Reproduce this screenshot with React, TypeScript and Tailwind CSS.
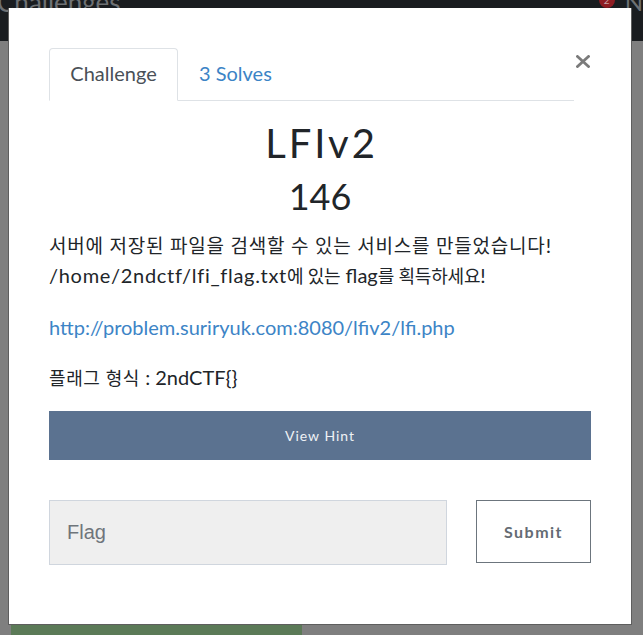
import React from 'react'

const kr = '"Lato", "Noto Sans CJK KR", sans-serif'

// 한글 구간: 원본 폭에 맞춰 줄마다 크기/자간을 다르게 준다
const Ko = ({ children, className = '' }: { children: React.ReactNode; className?: string }) => (
  <span className={`leading-[20px] ${className}`}>{children}</span>
)

const CloseIcon = () => (
  <svg width="14" height="13" viewBox="0 0 14 13" fill="none">
    <path d="M1.5 1.5L12.5 11.5M12.5 1.5L1.5 11.5" stroke="#7b7b7b" strokeWidth="2.8" strokeLinecap="square" />
  </svg>
)

const ChallengeModal = () => {
  return (
    <div className="absolute left-[8px] top-[8px] w-[624px] h-[617px] bg-white border border-[#5e5e5e] border-t-0">
      <div className="px-[40px] pt-[40px]">
        {/* 탭 */}
        <div className="flex">
          <ul className="flex w-[525px] border-b border-[#dee2e6] h-[53px]">
            <li className="w-[129px] h-[53px] -mb-px pb-[4px] border border-[#dee2e6] border-b-white rounded-t-[4px] bg-white flex items-center justify-center text-[20px] text-[#495057]">
              Challenge
            </li>
            <li className="pl-[21px] h-[52px] pb-[3px] flex items-center text-[20px] text-[#3c84c6]">3 Solves</li>
          </ul>
          <button className="ml-[2px] mt-[7px] w-[14px] h-[13px] flex">
            <CloseIcon />
          </button>
        </div>

        {/* 제목 / 점수 */}
        <h2 className="mt-[18px] text-center text-[40px] leading-[48px] tracking-[3px] text-[#212529] pl-[3px]">LFIv2</h2>
        <h3 className="mt-[8px] text-center text-[36px] leading-[43px] text-[#212529]">146</h3>

        {/* 설명 */}
        <div className="mt-[12px] text-[20px] leading-[30px] text-[#212529]" style={{ fontFamily: kr }}>
          <p>
            <Ko className="text-[19px] tracking-[0.8px]">서버에 저장된 파일을 검색할 수 있는 서비스를 만들었습니다</Ko>!
            <br />
            <span className="tracking-[0.7px]">/home/2ndctf/lfi_flag.txt</span>
            <Ko className="text-[18px] tracking-[-0.2px]">에 있는</Ko> flag
            <Ko className="text-[18px] tracking-[-0.2px]">를 획득하세요</Ko>!
          </p>
          <p className="mt-[22px]">
            <a className="text-[#3c84c6]">http://problem.suriryuk.com:8080/lfiv2/lfi.php</a>
          </p>
          <p className="mt-[20px]">
            <Ko className="text-[18px] tracking-[0.6px]">플래그 형식</Ko> : 2ndCTF{'{}'}
          </p>
        </div>

        <button className="mt-[19px] w-full h-[49px] bg-[#5b7290] text-[14px] tracking-[1px] text-[#eef1f5]">
          View Hint
        </button>

        {/* 플래그 입력 */}
        <div className="mt-[40px] flex justify-between">
          <input
            placeholder="Flag"
            className="w-[398px] h-[65px] bg-[#efefef] border border-[#d0d6de] pl-[17px] text-[20px] placeholder:text-[#6f757b] outline-none"
            style={{ fontFamily: '"Liberation Sans", Arial, sans-serif' }}
          />
          <button className="w-[115px] h-[63px] border border-[#6c757d] bg-white text-[16px] font-bold tracking-[1.5px] text-[#646b73]">
            Submit
          </button>
        </div>
      </div>
    </div>
  )
}

export default function App() {
  return (
    <div className="relative w-[643px] h-[635px] overflow-hidden bg-[#7f7f7f]" style={{ fontFamily: 'Lato, "Noto Sans", sans-serif' }}>
      {/* 뒤쪽 페이지 (어둡게 덮인 상태) */}
      <nav className="h-[41px] bg-[#1a1d20] flex justify-between overflow-hidden">
        <span className="-mt-[17px] -ml-[3px] text-[26px] text-[#6e7174]">Challenges</span>
        <div className="flex items-start -mt-[8px]">
          <span className="w-[16px] h-[16px] rounded-full bg-[#8e1c22] text-[10px] text-[#c9a0a2] flex items-center justify-center">2</span>
          <span className="ml-[10px] mt-[-8px] text-[24px] text-[#6e7174]">N</span>
        </div>
      </nav>
      <div className="mt-[584px] ml-[11px] w-[291px] h-[40px] bg-[#5b7a57] flex justify-center">
        <span className="-ml-[30px] text-[22px] tracking-[2px] text-[#8ea08b]">XSS-2</span>
      </div>

      <ChallengeModal />
    </div>
  )
}
